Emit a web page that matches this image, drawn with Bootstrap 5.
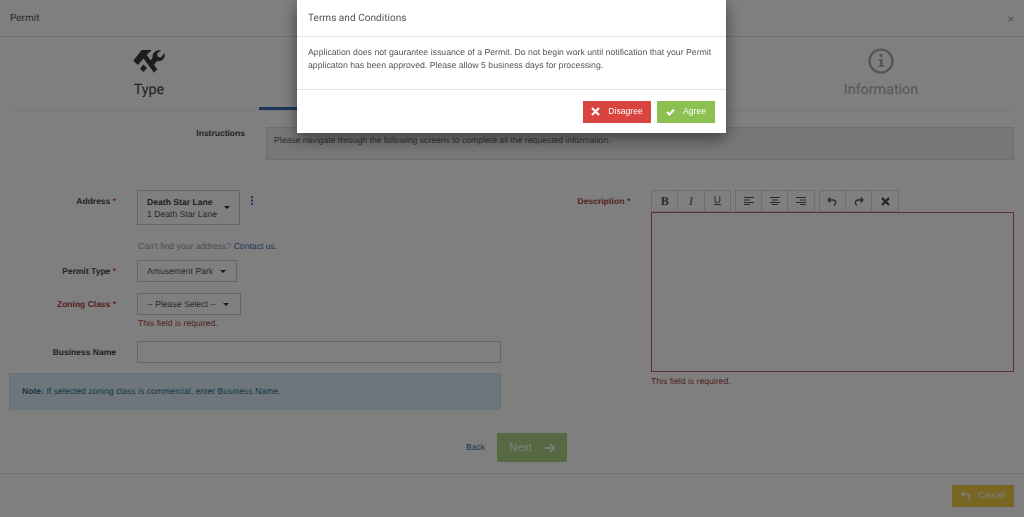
<!DOCTYPE html>
<html lang="en">
<head>
    <meta charset="UTF-8">
    <meta name="viewport" content="width=device-width, initial-scale=1.0">
    <title>Permit</title>
    <link href="https://cdn.jsdelivr.net/npm/bootstrap@5.3.0/dist/css/bootstrap.min.css" rel="stylesheet">
    <style>
        html, body { height: 517px; overflow: hidden; }
        body { background: #fff; font-family: "Liberation Sans", Arial, sans-serif; font-size: 8.65px; color: #444; text-rendering: geometricPrecision; }
        .permit-head { height: 37px; padding: 1px 10px 0; border-bottom: 1px solid #e5e5e5; font-family: Roboto, sans-serif; font-size: 10px; color: #555; }
        .head-close { font-size: 12px; color: #aaa; line-height: 1; }
        .tab-strip { margin: 0 10px; height: 74px; padding-left: 29px; border-bottom: 1px solid #eee; }
        .step-tab { height: 73px; padding-top: 12px; text-align: center; font-family: Roboto, sans-serif; font-size: 14.3px; line-height: 18px; color: #444; }
        .step-tab svg { display: block; margin: 0 auto 8px; }
        .step-one { width: 220px; }
        .step-two { width: 268px; border-bottom: 3px solid #3a6fb5; }
        .step-three { width: 244px; }
        .step-four { width: 220px; color: #aaa; }
        .intro-row { padding: 16px 10px 0 0; height: 63px; }
        .intro-label { width: 245px; text-align: right; font-size: 8.5px; font-weight: 700; color: #444; }
        .intro-box { margin-left: 21px; width: 748px; height: 33px; padding: 6px 7px; background: #eee; border: 1px solid #ddd; color: #666; }
        .form-area { height: 299px; }
        .form-left { width: 512px; padding-top: 16px; }
        .form-right { flex: 1; padding: 16px 10px 0 0; }
        .field-label { width: 116px; text-align: right; font-size: 8.5px; font-weight: 700; color: #444; }
        .field-label i { color: #d9534f; font-style: normal; }
        .is-bad, .is-bad i { color: #a94442; }
        .field-ctl { margin-left: 21px; }
        .pick-btn { display: flex; align-items: center; gap: 7px; height: 22px; padding: 0 10px 0 9px; background: #fff; border: 1px solid #ccc; color: #555; white-space: nowrap; }
        .pick-wide { padding-right: 11px; }
        .pick-tall { height: 35px; padding-right: 9px; line-height: 12px; }
        .pick-tall b { color: #444; }
        .caret-down { width: 0; height: 0; border-left: 3.5px solid transparent; border-right: 3.5px solid transparent; border-top: 3.5px solid #333; }
        .kebab { margin: 6px 0 0 10px; }
        .hint-line { margin: 14px 0 0 138px; height: 14px; line-height: 14px; color: #999; }
        .hint-line a { color: #3a6fb5; text-decoration: none; }
        .err-text { color: #a94442; line-height: 12px; }
        .biz-input { width: 364px; height: 22px; border: 1px solid #ccc; background: #fff; }
        .note-box { margin: 10px 0 0 9px; width: 492px; height: 37px; padding: 0 12px; background: #d9edf7; border: 1px solid #cfe6f1; color: #31708f; line-height: 35px; }
        .next-row { margin: 23px 0 0 466px; width: 46px; }
        .next-row a { flex: none; width: 31px; color: #3a6fb5; text-decoration: none; }
        .next-btn { flex: none; width: 70px; height: 29px; gap: 12px; background: #8cc152; color: #fff; font-size: 11px; border: 0; border-radius: 0; opacity: .7; }
        .desc-label { width: 118px; text-align: right; font-size: 8.5px; font-weight: 700; margin-top: 5px; }
        .desc-col { margin-left: 21px; width: 363px; }
        .tool-row { gap: 4px; }
        .tool-btn { width: 27.3px; height: 22px; margin-left: -1px; background: #fff; border: 1px solid #ddd; color: #555; font-size: 12px; line-height: 1; }
        .tool-btn:first-child { margin-left: 0; }
        .desc-edit { height: 160px; border: 1px solid #c06060; background: #fff; margin-bottom: 3px; }
        .foot-bar { height: 44px; padding: 0 10px; border-top: 1px solid #e5e5e5; }
        .cancel-btn { width: 62px; height: 22px; gap: 7px; background: #f0cc44; color: #fff; border: 0; border-radius: 0; font-size: 8.65px; padding: 0; }
        .terms-dialog { width: 429px; max-width: 429px; margin: 0 0 0 297px; }
        .terms-box { border: 0; border-radius: 0; box-shadow: 0 5px 15px rgba(0,0,0,.5); font-family: "Liberation Sans", Arial, sans-serif; font-size: 8.72px; color: #555; }
        .terms-head { height: 37px; padding: 1px 11px 0; border-bottom: 1px solid #e5e5e5; border-radius: 0; font-family: Roboto, sans-serif; font-size: 10.1px; color: #555; }
        .terms-body { height: 52px; padding: 9px 11px; line-height: 13px; }
        .terms-foot { height: 44px; padding: 0 11px; gap: 6px; border-top: 1px solid #e5e5e5; border-radius: 0; flex-wrap: nowrap; }
        .terms-btn { height: 22px; gap: 8px; padding: 0; margin: 0; border: 0; border-radius: 0; color: #fff; font-size: 8.6px; }
        .btn-nope { width: 68px; background: #d9443f; }
        .btn-yep { width: 58px; background: #8cc152; }
    </style>
</head>
<body>
    <div class="permit-head d-flex align-items-center justify-content-between">
        <span>Permit</span>
        <span class="head-close">&times;</span>
    </div>

    <div class="tab-strip d-flex">
        <div class="step-tab step-one">
            <svg width="32" height="24" viewBox="0 0 32 24" fill="#3a3a3a">
                <path d="M.3 11.700 8.700 1H18.700L13.700 6 24.300 20.300 21 23.700 10.500 9.500 5 16Z"/>
                <path d="M31.500 4C33 9 28.500 13 24 12L20.500 16.500 16.800 12.500 19.500 9C19 4 23 .5 28 1L24 5 25 8 28 8.500Z"/>
                <path d="M10.500 15.500 14 19 10.500 23 7 19.500Z"/>
            </svg>
            Type
        </div>
        <div class="step-tab step-two"></div>
        <div class="step-tab step-three"></div>
        <div class="step-tab step-four">
            <svg width="26" height="26" viewBox="0 0 26 26" style="margin-top:-1px;margin-bottom:7px">
                <circle cx="13" cy="13" r="11.500" fill="none" stroke="#aaa" stroke-width="2.200"/>
                <circle cx="13" cy="7.500" r="1.700" fill="#aaa"/>
                <path d="M10.500 11H14.500V17.500H16V19H10.500V17.500H12V12.500H10.500Z" fill="#aaa"/>
            </svg>
            Information
        </div>
    </div>

    <div class="intro-row d-flex align-items-start">
        <div class="intro-label">Instructions</div>
        <div class="intro-box">Please navigate through the following screens to complete all the requested information.</div>
    </div>

    <div class="form-area d-flex">
        <div class="form-left">
            <div class="d-flex">
                <div class="field-label" style="margin-top:5px">Address <i>*</i></div>
                <div class="field-ctl">
                    <div class="pick-btn pick-tall">
                        <span><b>Death Star Lane</b><br>1 Death Star Lane</span>
                        <span class="caret-down"></span>
                    </div>
                </div>
                <svg class="kebab" width="4" height="9" viewBox="0 0 4 9" fill="#2f6fc4"><rect x="1" y="0" width="2" height="2"/><rect x="1" y="3.500" width="2" height="2"/><rect x="1" y="7" width="2" height="2"/></svg>
            </div>
            <div class="hint-line">Can't find your address? <a href="#">Contact us.</a></div>

            <div class="d-flex align-items-center" style="margin-top:7px">
                <div class="field-label">Permit Type <i>*</i></div>
                <div class="field-ctl"><div class="pick-btn">Amusement Park <span class="caret-down"></span></div></div>
            </div>

            <div class="d-flex align-items-center" style="margin-top:11px">
                <div class="field-label is-bad">Zoning Class <i>*</i></div>
                <div class="field-ctl"><div class="pick-btn pick-wide">-- Please Select -- <span class="caret-down"></span></div></div>
            </div>
            <div class="err-text" style="margin:2px 0 0 138px">This field is required.</div>

            <div class="d-flex align-items-center" style="margin-top:12px">
                <div class="field-label">Business Name</div>
                <div class="field-ctl"><input class="biz-input" type="text"></div>
            </div>

            <div class="note-box"><b>Note:</b> If selected zoning class is commercial, enter Business Name.</div>

            <div class="next-row d-flex align-items-center">
                <a href="#">Back</a>
                <button class="next-btn btn d-flex align-items-center justify-content-center" type="button">
                    Next
                    <svg width="11" height="10" viewBox="0 0 11 10" fill="none" stroke="#fff" stroke-width="1.500"><path d="M.5 5H10M6 1 10 5 6 9"/></svg>
                </button>
            </div>
        </div>

        <div class="form-right d-flex">
            <div class="desc-label is-bad">Description <i>*</i></div>
            <div class="desc-col">
                <div class="tool-row d-flex">
                    <div class="d-flex">
                        <div class="tool-btn d-flex align-items-center justify-content-center" style="font-family:'Liberation Serif',serif;font-weight:700">B</div>
                        <div class="tool-btn d-flex align-items-center justify-content-center" style="font-family:'Liberation Serif',serif;font-style:italic">I</div>
                        <div class="tool-btn d-flex align-items-center justify-content-center text-decoration-underline" style="font-size:10px">U</div>
                    </div>
                    <div class="d-flex">
                        <div class="tool-btn d-flex align-items-center justify-content-center">
                            <svg width="10" height="8" viewBox="0 0 10 8" stroke="#555"><path d="M0 .5H10M0 3H6M0 5.500H10M0 7.500H6"/></svg>
                        </div>
                        <div class="tool-btn d-flex align-items-center justify-content-center">
                            <svg width="10" height="8" viewBox="0 0 10 8" stroke="#555"><path d="M0 .5H10M2 3H8M0 5.500H10M2 7.500H8"/></svg>
                        </div>
                        <div class="tool-btn d-flex align-items-center justify-content-center">
                            <svg width="10" height="8" viewBox="0 0 10 8" stroke="#555"><path d="M0 .5H10M4 3H10M0 5.500H10M4 7.500H10"/></svg>
                        </div>
                    </div>
                    <div class="d-flex">
                        <div class="tool-btn d-flex align-items-center justify-content-center">
                            <svg width="10" height="9" viewBox="0 0 10 9" fill="none" stroke="#555" stroke-width="1.300"><path d="M2 3H6C9 3 9.500 7 7 8.500"/><path d="M3.500 .5 1 3 3.500 5.500"/></svg>
                        </div>
                        <div class="tool-btn d-flex align-items-center justify-content-center">
                            <svg width="10" height="9" viewBox="0 0 10 9" fill="none" stroke="#555" stroke-width="1.300"><path d="M8 3H4C1 3 .5 7 3 8.500"/><path d="M6.500 .5 9 3 6.500 5.500"/></svg>
                        </div>
                        <div class="tool-btn d-flex align-items-center justify-content-center">
                            <svg width="9" height="9" viewBox="0 0 9 9" stroke="#444" stroke-width="2.200"><path d="M1 1 8 8M8 1 1 8"/></svg>
                        </div>
                    </div>
                </div>
                <div class="desc-edit"></div>
                <div class="err-text">This field is required.</div>
            </div>
        </div>
    </div>

    <div class="foot-bar d-flex align-items-center justify-content-end">
        <button class="cancel-btn btn d-flex align-items-center justify-content-center" type="button">
            <svg width="10" height="9" viewBox="0 0 10 9" fill="none" stroke="#fff" stroke-width="1.300"><path d="M2 3H6C9 3 9.500 7 7 8.500"/><path d="M3.500 .5 1 3 3.500 5.500"/></svg>
            Cancel
        </button>
    </div>

    <div class="modal-backdrop show"></div>

    <div class="modal d-block" tabindex="-1">
        <div class="modal-dialog terms-dialog">
            <div class="modal-content terms-box">
                <div class="modal-header terms-head">Terms and Conditions</div>
                <div class="modal-body terms-body">Application does not gaurantee issuance of a Permit. Do not begin work until notification that your Permit applicaton has been approved. Please allow 5 business days for processing.</div>
                <div class="modal-footer terms-foot">
                    <button class="btn terms-btn btn-nope d-flex align-items-center justify-content-center" type="button">
                        <svg width="9" height="9" viewBox="0 0 9 9" stroke="#fff" stroke-width="2.200"><path d="M1 1 8 8M8 1 1 8"/></svg>
                        Disagree
                    </button>
                    <button class="btn terms-btn btn-yep d-flex align-items-center justify-content-center" type="button">
                        <svg width="9" height="8" viewBox="0 0 9 8" fill="none" stroke="#fff" stroke-width="1.900"><path d="M1 4 3.500 6.500 8 1.500"/></svg>
                        Agree
                    </button>
                </div>
            </div>
        </div>
    </div>

    <script src="https://cdn.jsdelivr.net/npm/bootstrap@5.3.0/dist/js/bootstrap.bundle.min.js"></script>
</body>
</html>
